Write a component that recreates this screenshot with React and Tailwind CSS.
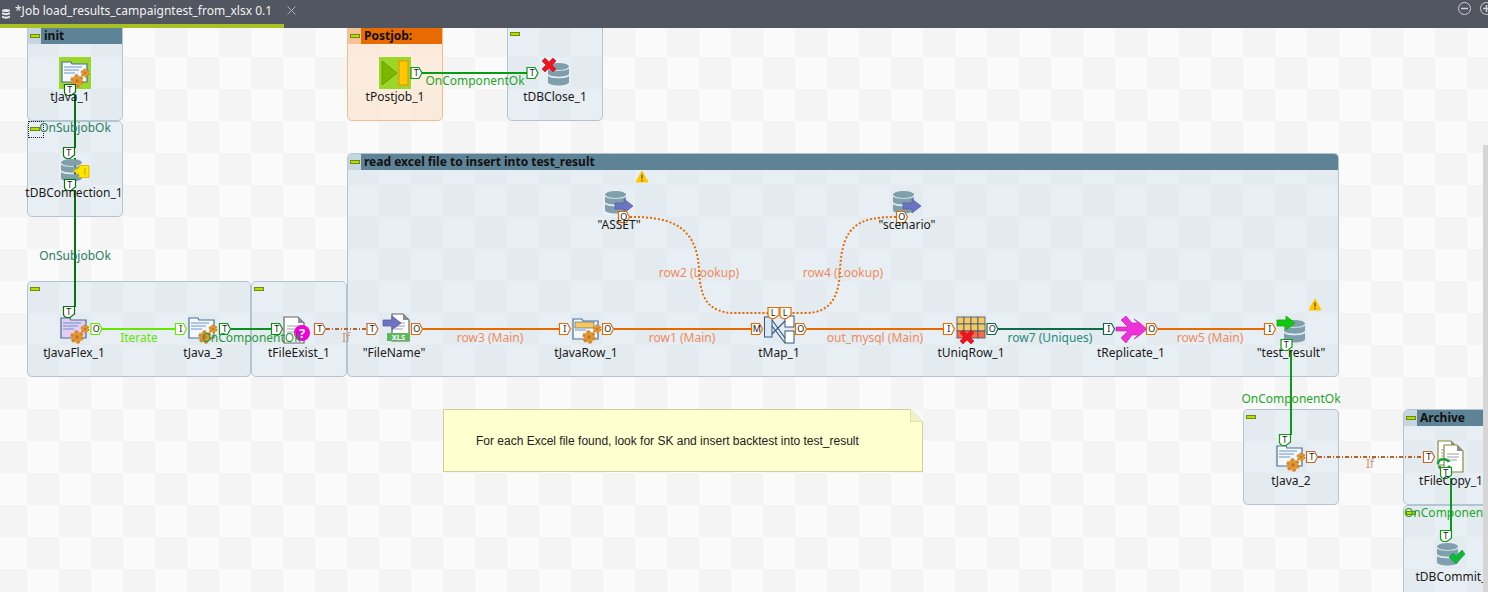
import React from "react";

const FONT = "font-['Noto_Sans','Open_Sans',sans-serif]";

// subjob boxes, in page coordinates (the tab bar covers the first 28px)
const subjobs = [
  { x: 27, y: 12, w: 96, h: 109, title: "init", headerY: 16 },
  { x: 27, y: 121, w: 96, h: 96 },
  { x: 27, y: 281, w: 224, h: 96 },
  { x: 251, y: 281, w: 96, h: 96 },
  { x: 347, y: 12, w: 96, h: 109, title: "Postjob:", headerY: 16, orange: true },
  { x: 507, y: 12, w: 96, h: 109 },
  { x: 347, y: 153, w: 992, h: 224, title: "read excel file to insert into test_result" },
  { x: 1243, y: 409, w: 96, h: 96 },
  { x: 1403, y: 409, w: 120, h: 96, title: "Archive" },
  { x: 1403, y: 505, w: 120, h: 120 },
];

const names = [
  ["tJava_1", 70, 97],
  ["tDBConnection_1", 74, 193],
  ["tPostjob_1", 395, 97],
  ["tDBClose_1", 555, 97],
  ['"ASSET"', 619, 225],
  ['"scenario"', 907, 225],
  ["tJavaFlex_1", 74, 353],
  ["tJava_3", 203, 353],
  ["tFileExist_1", 299, 353],
  ['"FileName"', 394, 353],
  ["tJavaRow_1", 586, 353],
  ["tMap_1", 779, 353],
  ["tUniqRow_1", 971, 353],
  ["tReplicate_1", 1131, 353],
  ['"test_result"', 1291, 353],
  ["tJava_2", 1291, 481],
  ["tFileCopy_1", 1451, 481],
  ["tDBCommit_", 1451, 577],
];

const links = [
  ["OnSubjobOk", 75, 128, "text-[#2b7d62]"],
  ["OnSubjobOk", 75, 256, "text-[#2b7d62]"],
  ["Iterate", 139, 338, "text-[#66e600]"],
  ["OnComponentOk", 251, 338, "text-[#1f9a3a]"],
  ["If", 346, 338, "text-[#cf9a7c]"],
  ["row3 (Main)", 490, 338, "text-[#ee8a5c]"],
  ["row1 (Main)", 682, 338, "text-[#ee8a5c]"],
  ["out_mysql (Main)", 875, 338, "text-[#ee8a5c]"],
  ["row7 (Uniques)", 1050, 338, "text-[#2b8a7a]"],
  ["row5 (Main)", 1210, 338, "text-[#ee8a5c]"],
  ["row2 (Lookup)", 699, 273, "text-[#ee8a5c]"],
  ["row4 (Lookup)", 843, 273, "text-[#ee8a5c]"],
  ["OnComponentOk", 475, 81, "text-[#1fa52a]"],
  ["OnComponentOk", 1291, 399, "text-[#1fa52a]"],
  ["If", 1370, 464, "text-[#cf9a7c]"],
];

// [letter, x, y, colour, pointing down?]
const ports = [
  ["T", 70, 90, "#0a6e14", true],
  ["T", 69, 153, "#0a6e14", true],
  ["T", 70, 185, "#0a6e14", true],
  ["T", 69, 312, "#0a6e14", true],
  ["O", 96.5, 329, "#66e600"],
  ["I", 181, 329, "#66e600"],
  ["T", 225, 329, "#0a8f1a"],
  ["T", 277, 329, "#0a8f1a"],
  ["T", 320, 329, "#c0692c"],
  ["T", 372.5, 329, "#c0692c"],
  ["O", 417, 329, "#e56a00"],
  ["I", 565, 329, "#e56a00"],
  ["O", 608, 329, "#e56a00"],
  ["M", 757, 329, "#e56a00"],
  ["L", 773.5, 313, "#e56a00", true],
  ["L", 785.5, 313, "#e56a00", true],
  ["O", 801, 329, "#e56a00"],
  ["I", 949, 329, "#e56a00"],
  ["O", 992.5, 329, "#0f6b45"],
  ["I", 1109, 329, "#0f6b45"],
  ["O", 1152, 329, "#e56a00"],
  ["I", 1270, 329, "#e56a00"],
  ["T", 1286.5, 345, "#0a9a14", true],
  ["T", 1285, 440, "#0a9a14", true],
  ["T", 1312, 457, "#c0692c"],
  ["T", 1429, 457, "#c0692c"],
  ["T", 1446, 473, "#0a9a14", true],
  ["T", 1446, 536, "#0a9a14", true],
  ["T", 416.5, 73, "#0a9a14"],
  ["T", 532.5, 73, "#0a9a14"],
  ["O", 624, 217, "#e56a00"],
  ["O", 902, 217, "#e56a00"],
];

const Port = ({ letter, x, y, color, down }) => (
  <g transform={`translate(${x} ${y})`}>
    <path
      d={down ? "M-5.5-5.5H5.5V2L1 5.5H-1.5C-4 5.5-5.5 3.5-5.5 2Z" : "M-5.5-5.5H2.5L5.5 0 2.5 5.5H-5.5Z"}
      fill="#fff"
      stroke={color}
      strokeWidth="1.2"
    />
    <text x="-0.3" y="3.2" textAnchor="middle" fontSize="9" fontFamily="Noto Sans, sans-serif" fill="#222">
      {letter}
    </text>
  </g>
);

const Gear = ({ x, y, r }) => (
  <g>
    <circle cx={x} cy={y} r={r} fill="#e39a34" stroke="#d0852a" strokeWidth={r * 0.45} strokeDasharray={`${r * 0.55} ${r * 0.5}`} />
    <circle cx={x} cy={y} r={r * 0.35} fill="#c9782a" />
  </g>
);

const Gears = ({ x, y }) => (
  <g>
    <Gear x={x} y={y} r={5.5} />
    <Gear x={x + 8} y={y - 8} r={3.6} />
  </g>
);

const Db = ({ x, y }) => (
  <g transform={`translate(${x} ${y})`} fill="#7f9fad">
    <ellipse cx="10.5" cy="3.5" rx="10.5" ry="3.5" />
    <path d="M0 5.5C2 8.5 19 8.5 21 5.5V11C19 14.5 2 14.5 0 11Z" />
    <path d="M0 13C2 16 19 16 21 13V19.5C19 23.500 2 23.500 0 19.500Z" />
  </g>
);

const Win = ({ x, y, fill = "#f3f8fd", stroke = "#4a6f9a" }) => (
  <g>
    <path d={`M${x} ${y + 1}H${x + 9}L${x + 10} ${y + 3}H${x + 25}V${y + 21}H${x}Z`} fill={fill} stroke={stroke} strokeWidth="1.2" />
    <path d={`M${x + 2} ${y + 6}H${x + 20}M${x + 2} ${y + 9}H${x + 17}M${x + 2} ${y + 12}H${x + 13}`} stroke="#6d94c4" strokeWidth="1" />
  </g>
);

const Warn = ({ x, y }) => (
  <g>
    <path d={`M${x} ${y - 6}L${x + 6} ${y + 5}H${x - 6}Z`} fill="#ffc800" stroke="#ffc800" strokeLinejoin="round" />
    <path d={`M${x} ${y - 2.500}V${y + 1.500}M${x} ${y + 2.800}V${y + 4.200}`} stroke="#5a4500" strokeWidth="1.300" />
  </g>
);

const Arrow = ({ x, y, fill, stroke }) => (
  <path
    d={`M${x} ${y + 4}H${x + 9}V${y}L${x + 18} ${y + 7}L${x + 9} ${y + 14}V${y + 10}H${x}Z`}
    fill={fill}
    stroke={stroke}
    strokeWidth="0.8"
  />
);

const Doc = ({ x, y, w = 19, h = 26, stroke = "#666" }) => (
  <g>
    <path d={`M${x} ${y}H${x + w - 6}L${x + w} ${y + 6}V${y + h}H${x}Z`} fill="#fff" stroke={stroke} strokeWidth="1.200" />
    <path d={`M${x + w - 6} ${y}V${y + 6}H${x + w}Z`} fill="#8a8f96" />
    <path d={`M${x + 3} ${y + 9}H${x + w - 4}M${x + 3} ${y + 12}H${x + w - 4}M${x + 3} ${y + 15}H${x + w - 6}`} stroke="#9a9fa6" />
  </g>
);

const Cross = ({ x, y }) => (
  <path
    d={`M${x - 7} ${y - 4}L${x - 4} ${y - 7}L${x} ${y - 3}L${x + 4} ${y - 7}L${x + 7} ${y - 4}L${x + 3} ${y}L${x + 7} ${y + 4}L${x + 4} ${y + 7}L${x} ${y + 3}L${x - 4} ${y + 7}L${x - 7} ${y + 4}L${x - 3} ${y}Z`}
    fill="#f0141e"
    stroke="#c8101a"
    strokeWidth="0.600"
  />
);

const Grid = ({ x, y, w = 4, cell = 7, rows = 3, fill = "#f8c860" }) => (
  <g stroke="#35597f" strokeWidth="0.800">
    {Array.from({ length: rows }).flatMap((_, r) =>
      Array.from({ length: w }).map((_, c) => (
        <rect key={`${r}-${c}`} x={x + c * cell} y={y + r * cell} width={cell} height={cell} fill={r === 2 ? "#ff6a3c" : fill} />
      ))
    )}
  </g>
);

const Icons = () => (
  <g>
    {/* tJava_1 */}
    <rect x="59" y="57" width="32" height="32" fill="#9bd62a" />
    <Win x={62} y={61} />
    <Gears x={77} y={81} />

    {/* tDBConnection_1 */}
    <Db x={61} y={159} />
    <path d="M73 171L79 168V165.500H89V177.500H79V174Z" fill="#ffe600" stroke="#e0b800" />
    <path d="M85 168V175" stroke="#c8a000" />

    {/* tPostjob_1 */}
    <rect x="379" y="57" width="32" height="32" fill="#9bd62a" />
    <path d="M382 61L397 73L382 85Z" fill="#7ab800" stroke="#6a9c00" />
    <rect x="399" y="61" width="9" height="24" fill="#ffc800" stroke="#f08a00" />

    {/* tDBClose_1 */}
    <Db x={548} y={63} />
    <Cross x={549} y={65} />

    {/* lookups */}
    <Db x={605} y={191} />
    <Arrow x={615} y={199} fill="#6c73c0" stroke="#5a60a8" />
    <Warn x={642} y={177} />
    <Db x={893} y={191} />
    <Arrow x={903} y={199} fill="#6c73c0" stroke="#5a60a8" />

    {/* tJavaFlex_1, tJava_3 */}
    <Win x={61} y={317} fill="#e4cdf4" />
    <Gears x={77} y={337} />
    <Win x={189} y={317} />
    <Gears x={205} y={337} />

    {/* tFileExist_1 */}
    <Doc x={284} y={317} w={20} />
    <circle cx="302" cy="333" r="8" fill="#f000d8" />
    <text x="302" y="338" textAnchor="middle" fontSize="13" fontWeight="700" fontFamily="Noto Sans, sans-serif" fill="#fff">?</text>

    {/* "FileName" */}
    <Doc x={392} y={314} w={17} h={27} />
    <Arrow x={383} y={316} fill="#6c73c0" stroke="#5a60a8" />
    <rect x="387" y="333" width="23" height="8" fill="#5cb85c" />
    <text x="398.500" y="340" textAnchor="middle" fontSize="7.500" fontWeight="700" fontFamily="Noto Sans, sans-serif" fill="#fff">XLS</text>

    {/* tJavaRow_1 */}
    <Win x={573} y={318} />
    <rect x="575" y="322" width="19" height="6" fill="#f8c860" stroke="#35597f" strokeWidth="0.600" />
    <Gears x={589} y={337} />

    {/* tMap_1 */}
    <g stroke="#35597f" fill="#fff">
      <rect x="764.500" y="317" width="7.500" height="20" fill="#dbe8f4" />
      <rect x="785" y="316" width="9" height="11" />
      <rect x="785" y="331" width="9" height="12" />
      <path d="M772 320L785 338M772 334L785 321M772 326L785 343" strokeWidth="1.200" fill="none" />
    </g>

    {/* tUniqRow_1 */}
    <Grid x={957} y={317} />
    <Cross x={967} y={337} />

    {/* tReplicate_1 */}
    <path
      d="M1116 327H1128L1121 320L1126 316L1132 323H1138L1134 319L1140 323L1147 329L1140 335L1134 339L1138 335H1132L1126 343L1121 338L1128 331H1116Z"
      fill="#f030d8"
      stroke="#b020b0"
      strokeWidth="0.600"
    />

    {/* "test_result" */}
    <Db x={1284} y={320} />
    <Arrow x={1277} y={316} fill="#10c810" stroke="#0ca80c" />
    <Warn x={1315} y={305} />

    {/* tJava_2 */}
    <Win x={1277} y={445} />
    <Gears x={1293} y={465} />

    {/* tFileCopy_1 */}
    <Doc x={1438} y={441} w={19} h={24} stroke="#8a8a3a" />
    <Doc x={1444} y={445} w={19} h={27} stroke="#8a8a3a" />
    <path d="M1438 464C1438 458 1447 458 1449 462M1450 466C1446 471 1440 469 1439 466" fill="none" stroke="#14a03c" strokeWidth="2.500" />

    {/* tDBCommit_ */}
    <Db x={1437} y={543} />
    <path d="M1449 557L1453 553L1456 556L1462 550L1465 554L1456 564Z" fill="#10b83a" stroke="#0c9a30" strokeWidth="0.600" />
  </g>
);

const Wires = () => (
  <g fill="none">
    <path d="M75 95V148M75 158V180M75 190V307" stroke="#0a6e14" strokeWidth="2" />
    <path d="M102 329H176" stroke="#66e600" strokeWidth="2" />
    <path d="M231 329H272" stroke="#0a8f1a" strokeWidth="2" />
    <path d="M326 329H367" stroke="#b5652c" strokeWidth="2" strokeDasharray="4 2 1 2" />
    <path d="M423 329H560M614 329H752M807 329H944M1158 329H1265" stroke="#e56a00" strokeWidth="2" />
    <path d="M998 329H1104" stroke="#0f6b45" strokeWidth="2" />
    <path d="M422 73H527" stroke="#0a9a14" strokeWidth="2" />
    <path d="M1291 350V435" stroke="#0a9a14" strokeWidth="2" />
    <path d="M1318 457H1424" stroke="#b5652c" strokeWidth="2" strokeDasharray="4 2 1 2" />
    <path d="M1451 478V531" stroke="#0a9a14" strokeWidth="2" />
    <path d="M630 217C665 217 697 222 699 270C700 298 708 313 735 313H768" stroke="#e56a00" strokeWidth="2" strokeDasharray="2 2" />
    <path d="M896 217C860 217 842 224 840 270C839 298 830 313 805 313H791" stroke="#e56a00" strokeWidth="2" strokeDasharray="2 2" />
  </g>
);

const Toggle = () => <span className="block h-[4px] w-[10px] border border-[#6f8a10] bg-[#b4e000]" />;

const Subjob = ({ box }) => (
  <div
    className={`absolute overflow-hidden rounded-[5px] border ${box.orange ? "border-[#f4bd90] bg-[#fbe3cc]/60" : "border-[#b2c6d2] bg-[#c5dbe8]/35"}`}
    style={{ left: box.x, top: box.y, width: box.w, height: box.h }}
  >
    {box.headerY && <div style={{ height: box.headerY - 1 }} />}
    {box.title ? (
      <div className="flex h-[16px] items-stretch">
        <div className={`flex w-[13px] items-center justify-center ${box.orange ? "bg-[#f5c197]" : "bg-[#c6d6df]"}`}>
          <Toggle />
        </div>
        <div className={`flex-1 pl-[3px] text-[12px] leading-[15px] font-bold text-[#111] ${box.orange ? "bg-[#e86a00]" : "bg-[#5e8397]"}`}>
          {box.title}
        </div>
      </div>
    ) : (
      <div className={`flex px-[2px] ${box.y === 12 ? "pt-[19px]" : "pt-[5px]"}`}>
        <Toggle />
      </div>
    )}
  </div>
);

const Label = ({ text, x, y, className }) => (
  <span
    className={`absolute -translate-x-1/2 -translate-y-1/2 whitespace-nowrap text-[12px] leading-none ${className}`}
    style={{ left: x, top: y }}
  >
    {text}
  </span>
);

const TabBar = () => (
  <div className="relative z-10 flex h-[28px] shrink-0 items-start justify-between bg-[#525661]">
    <div className="flex h-[28px] w-[284px] items-center gap-[5px] border-b-[4px] border-[#a8c023] pb-[3px] pl-[2px]">
      <svg width="8" height="10" viewBox="0 0 8 10" className="mt-[6px] shrink-0" fill="#e8e8e8">
        <ellipse cx="4" cy="1.500" rx="4" ry="1.500" />
        <path d="M0 3C1 4.500 7 4.500 8 3V5C7 6.500 1 6.500 0 5ZM0 6.500C1 8 7 8 8 6.500V8.500C7 10 1 10 0 8.500Z" />
      </svg>
      <span className="text-[12px] whitespace-nowrap text-[#f2f2f2]">*Job load_results_campaigntest_from_xlsx 0.1</span>
      <svg width="9" height="9" viewBox="0 0 9 9" className="ml-[10px] shrink-0" stroke="#aeb1b8" fill="none">
        <path d="M.5.5L8.500 8.500M8.500.5L.5 8.500" />
      </svg>
    </div>
    <div className="mt-[2px] flex gap-[9px] pr-0">
      <svg width="13" height="13" viewBox="0 0 13 13" fill="none" stroke="#cfd1d5">
        <circle cx="6.500" cy="6.500" r="6" />
        <path d="M3 6.500H10" strokeWidth="1.500" />
      </svg>
      <svg width="8" height="13" viewBox="0 0 8 13" fill="none" stroke="#cfd1d5">
        <circle cx="6.500" cy="6.500" r="6" />
        <path d="M3 6.500H10M6.500 3V10" strokeWidth="1.500" />
      </svg>
    </div>
  </div>
);

export default function App() {
  return (
    <div className={`flex h-[592px] w-[1488px] flex-col overflow-hidden ${FONT}`}>
      <TabBar />

      <div className="relative flex-1 overflow-hidden bg-[#fafafa] bg-[conic-gradient(#f4f4f4_25%,#fafafa_0_50%,#f4f4f4_0_75%,#fafafa_0)] bg-[length:64px_64px] bg-[position:59px_-3px]">
        {/* diagram is placed in page coordinates */}
        <div className="absolute top-[-28px] left-0 h-[592px] w-[1488px]">
          {subjobs.map((box) => (
            <Subjob key={`${box.x}-${box.y}`} box={box} />
          ))}

          {/* selection marker */}
          <div className="absolute top-[121px] left-[28px] h-[17px] w-[16px] border border-dotted border-[#222]" />

          <svg width="1488" height="592" viewBox="0 0 1488 592" className="absolute top-0 left-0">
            <Wires />
            <Icons />
            {ports.map(([letter, x, y, color, down]) => (
              <Port key={`${x}-${y}`} letter={letter} x={x} y={y} color={color} down={down} />
            ))}
          </svg>

          {links.map(([text, x, y, color]) => (
            <Label key={`${text}-${x}-${y}`} text={text} x={x} y={y} className={color} />
          ))}
          <span className="absolute top-[506px] left-[1404px] text-[12px] leading-[13px] whitespace-nowrap text-[#1fa52a]">OnComponent</span>
          {names.map(([text, x, y]) => (
            <Label key={text} text={text} x={x} y={y} className="text-[#1a1a1a]" />
          ))}

          {/* note */}
          <div className="absolute top-[409px] left-[443px] flex h-[63px] w-[480px] items-center border border-[#cfcf9a] bg-[#ffffcf] pl-[32px] font-['Liberation_Sans',sans-serif] text-[12px] text-[#222]">
            For each Excel file found, look for SK and insert backtest into test_result
            <svg width="13" height="13" viewBox="0 0 13 13" className="absolute top-[-1px] right-[-1px]">
              <path d="M0 0L13 13H0Z" fill="#f2f2c4" stroke="#cfcf9a" />
              <path d="M0 0H13V13Z" fill="#f8f8f8" />
            </svg>
          </div>
        </div>

        {/* vertical scrollbar */}
        <div className="absolute top-[117px] right-0 bottom-0 w-[5px] bg-[#d6d6d6]" />
      </div>
    </div>
  );
}
